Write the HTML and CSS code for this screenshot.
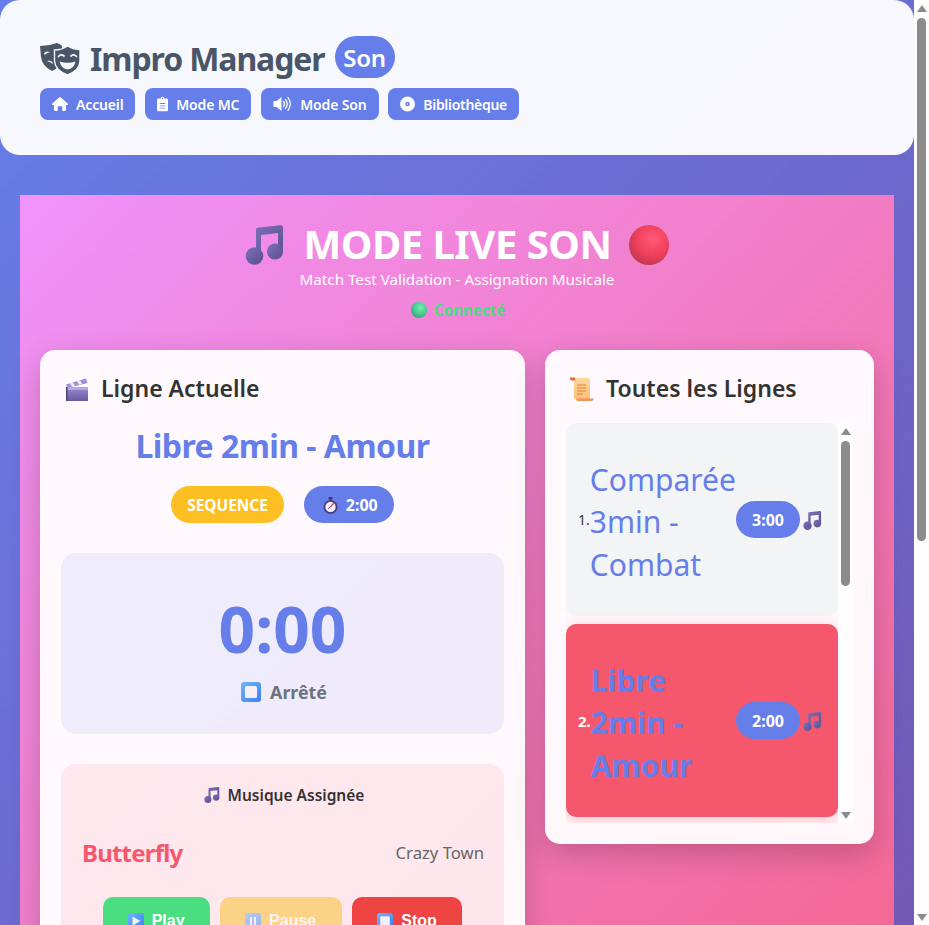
FILE: index.html
```html
<!DOCTYPE html>
<html lang="fr">
<head>
<meta charset="utf-8">
<title>Impro Manager - Mode Live Son</title>
<link rel="stylesheet" href="styles.css">
</head>
<body>
<svg class="defs" aria-hidden="true">
  <defs>
    <linearGradient id="gNote" x1="0" y1="0" x2="1" y2="1"><stop offset="0" stop-color="#7f6fb8"/><stop offset="1" stop-color="#58508f"/></linearGradient>
    <radialGradient id="gRed" cx=".6" cy=".35" r=".7"><stop offset="0" stop-color="#ff5a78"/><stop offset=".6" stop-color="#ee3f5c"/><stop offset="1" stop-color="#bf3750"/></radialGradient>
    <radialGradient id="gGreen" cx=".6" cy=".35" r=".7"><stop offset="0" stop-color="#6ff0ae"/><stop offset=".6" stop-color="#48c98f"/><stop offset="1" stop-color="#3b9d80"/></radialGradient>
    <linearGradient id="gBlue" x1="0" y1="0" x2="1" y2="1"><stop offset="0" stop-color="#6fb4fb"/><stop offset="1" stop-color="#3b82ee"/></linearGradient>
    <linearGradient id="gClap" x1="0" y1="0" x2="0" y2="1"><stop offset="0" stop-color="#8d7fc4"/><stop offset="1" stop-color="#6a5a9f"/></linearGradient>
    <linearGradient id="gScroll" x1="0" y1="0" x2="0" y2="1"><stop offset="0" stop-color="#ffd79a"/><stop offset="1" stop-color="#fbbf78"/></linearGradient>
    <symbol id="i-note" viewBox="0 0 42 40">
      <path fill="url(#gNote)" d="M11 4.500Q11 3 12.500 2.800L35 .2Q38 0 38 3V27H33V8L16 10V31H11Z"/>
      <circle fill="url(#gNote)" cx="9.500" cy="31" r="8.800"/>
      <circle fill="url(#gNote)" cx="30" cy="26.500" r="8"/>
    </symbol>
    <symbol id="i-red" viewBox="0 0 40 40"><circle cx="20" cy="20" r="20" fill="url(#gRed)"/></symbol>
    <symbol id="i-green" viewBox="0 0 16 16"><circle cx="8" cy="8" r="8" fill="url(#gGreen)"/></symbol>
    <symbol id="i-clap" viewBox="0 0 24 24">
      <path fill="#9d8fd6" d="M1 7.500 21 1.500 22.500 6 2.500 11Z"/>
      <path fill="#f1ecfb" d="M5 6.300 8 5.400 10 9 7 9.700ZM12 4.200 15 3.300 17 7 14 7.800Z"/>
      <rect x="1" y="10" width="22" height="3.500" fill="#b4a8e4"/>
      <rect x="1" y="13" width="22" height="11" fill="url(#gClap)"/>
      <rect x="1" y="10" width="1.500" height="14" fill="#4a3f7a"/>
    </symbol>
    <symbol id="i-scroll" viewBox="0 0 24 24">
      <path fill="url(#gScroll)" d="M3 1H18Q20 1 20 3V22H6Q4 22 4 20V4Q4 2 3 1Z"/>
      <path fill="#e2683c" d="M0 .5H5V3.500H2Q0 3.500 0 1.500Z"/>
      <path fill="#f0935a" d="M6 21.500H24Q23 24 21 24H8Q6 24 6 21.500Z"/>
      <path fill="none" stroke="#ea9a55" stroke-width="1.300" d="M7 8H16M7 11H16M7 14H16M7 17H13"/>
    </symbol>
    <symbol id="i-watch" viewBox="0 0 16 18">
      <rect x="6" y="0" width="4" height="2" fill="#3b2f66"/>
      <rect x="7" y="1" width="2" height="3" fill="#3b2f66"/>
      <circle cx="8" cy="10.500" r="7.500" fill="#4c3f7d"/>
      <circle cx="8" cy="10.500" r="5.500" fill="#f3effa"/>
      <path stroke="#f0325a" stroke-width="1.500" d="M8 10.500 11.500 6.500"/>
      <path stroke="#4c3f7d" d="M8 10.500 5.500 12.500"/>
    </symbol>
    <symbol id="i-stop" viewBox="0 0 20 20">
      <rect width="20" height="20" rx="3" fill="url(#gBlue)"/>
      <rect x="4" y="4" width="12" height="12" rx="1.500" fill="#f7eefc"/>
    </symbol>
    <symbol id="i-play" viewBox="0 0 16 16">
      <rect width="16" height="16" rx="2.500" fill="url(#gBlue)"/>
      <path fill="#eef4fd" d="M4.500 3.500 12.500 8 4.500 12.500Z"/>
    </symbol>
    <symbol id="i-pause" viewBox="0 0 16 16">
      <rect width="16" height="16" rx="2.500" fill="url(#gBlue)"/>
      <path fill="#eef4fd" d="M5 4H7V12H5ZM9 4H11V12H9Z"/>
    </symbol>
    <symbol id="i-masks" viewBox="0 0 40 32">
      <path fill="#4a5568" d="M0 3Q9 3 17 0 20 1 22 3L22 16Q20 25 12 28 2 23 1 14Z"/>
      <path fill="#f7f8fe" d="M4 10.500Q6.500 7 10 9.500 7 9 4.800 12ZM12.500 21Q8 17 6.500 19 8 16 12.500 19Z"/>
      <path fill="#4a5568" stroke="#f7f8fe" stroke-width="1.400" d="M14.500 7Q22 7 27.500 3 33 6.500 40 6.500V18Q40 27 27.500 32 15 27 14.500 18Z"/>
      <path fill="none" stroke="#f7f8fe" stroke-width="1.800" stroke-linecap="round" d="M18.500 13.500Q21 10.500 24 13M31 13Q34 10.500 36.500 13.500"/>
      <path fill="#f7f8fe" d="M19.500 18.500Q28 21 35.500 18.500 34 26 27.500 26.500 21.500 26 19.500 18.500Z"/>
    </symbol>
    <symbol id="i-home" viewBox="0 0 16 14"><path d="M7.300.3Q8 -.2 8.700.3L15.700 6.500Q16.300 7.200 15.800 7.700 15.400 8.200 14.800 8H14V12.800Q14 14 12.800 14H10.300V9.800Q10.300 9.300 9.800 9.300H6.200Q5.700 9.300 5.700 9.800V14H3.200Q2 14 2 12.800V8H1.200Q.6 8.200 .2 7.700-.3 7.200 .3 6.500Z"/></symbol>
    <symbol id="i-clip" viewBox="0 0 12 16"><path fill-rule="evenodd" d="M4 2Q4 0 6 0T8 2H10.500Q12 2 12 3.500V14.500Q12 16 10.500 16H1.500Q0 16 0 14.500V3.500Q0 2 1.500 2ZM5.300 2A.7.7 0 1 0 6.700 2 .7.7 0 1 0 5.300 2ZM3 7V8H9V7ZM3 9.500V10.500H9V9.500ZM3 12V13H9V12Z"/></symbol>
    <symbol id="i-vol" viewBox="0 0 18 16">
      <path d="M0 5H3L8 1V15L3 11H0Z"/>
      <path fill="none" stroke="#fff" stroke-width="1.300" stroke-linecap="round" d="M10 5.500Q12 8 10 10.500M12 3.500Q15.500 8 12 12.500M14.500 1.500Q19 8 14.500 14.500"/>
    </symbol>
    <symbol id="i-disc" viewBox="0 0 16 16"><path fill-rule="evenodd" d="M8 0A8 8 0 1 1 8 16 8 8 0 1 1 8 0ZM8 5.500A2.500 2.500 0 1 0 8 10.500 2.500 2.500 0 1 0 8 5.500ZM8 7.200A.8.8 0 1 1 8 8.800 .8.8 0 1 1 8 7.200Z"/></symbol>
  </defs>
</svg>

<div class="viewport">
  <div class="page">
    <header class="topbar">
      <div class="brand">
        <svg class="brand-icon"><use href="#i-masks"/></svg>
        <span class="brand-name">Impro Manager</span>
        <span class="brand-badge">Son</span>
      </div>
      <nav class="nav">
        <a class="nav-link"><svg class="nav-icon nav-home"><use href="#i-home"/></svg>Accueil</a>
        <a class="nav-link"><svg class="nav-icon nav-clip"><use href="#i-clip"/></svg>Mode MC</a>
        <a class="nav-link"><svg class="nav-icon nav-vol"><use href="#i-vol"/></svg>Mode Son</a>
        <a class="nav-link nav-link-lib"><svg class="nav-icon nav-disc"><use href="#i-disc"/></svg>Bibliothèque</a>
      </nav>
    </header>

    <main class="live">
      <section class="live-head">
        <h1 class="live-title">
          <svg class="live-note"><use href="#i-note"/></svg>
          <span class="live-text">MODE LIVE SON</span>
          <svg class="live-ball"><use href="#i-red"/></svg>
        </h1>
        <p class="live-sub">Match Test Validation - Assignation Musicale</p>
        <p class="live-conn"><svg class="conn-ball"><use href="#i-green"/></svg>Connecté</p>
      </section>

      <div class="columns">
        <section class="card">
          <h2 class="card-title"><svg class="title-icon"><use href="#i-clap"/></svg>Ligne Actuelle</h2>
          <div class="line-name">Libre 2min - Amour</div>
          <div class="line-meta">
            <span class="pill pill-type">SEQUENCE</span>
            <span class="pill pill-time"><svg class="watch"><use href="#i-watch"/></svg>2:00</span>
          </div>
          <div class="timer">
            <div class="timer-value">0:00</div>
            <div class="timer-status"><svg class="status-icon"><use href="#i-stop"/></svg>Arrêté</div>
          </div>
          <div class="music">
            <h3 class="music-title"><svg class="music-note"><use href="#i-note"/></svg>Musique Assignée</h3>
            <div class="track">
              <span class="track-name">Butterfly</span>
              <span class="track-artist">Crazy Town</span>
            </div>
            <div class="controls">
              <button class="ctl ctl-play"><svg class="ctl-icon"><use href="#i-play"/></svg>Play</button>
              <button class="ctl ctl-pause"><svg class="ctl-icon"><use href="#i-pause"/></svg>Pause</button>
              <button class="ctl ctl-stop"><svg class="ctl-icon"><use href="#i-stop"/></svg>Stop</button>
            </div>
          </div>
        </section>

        <aside class="card card-side">
          <h2 class="card-title"><svg class="title-icon title-scroll"><use href="#i-scroll"/></svg>Toutes les Lignes</h2>
          <div class="list-box">
            <div class="list">
              <div class="item">
                <span class="item-num">1.</span>
                <span class="item-name">Comparée 3min - Combat</span>
                <span class="pill pill-time">3:00</span>
                <svg class="item-note"><use href="#i-note"/></svg>
              </div>
              <div class="item item-active">
                <span class="item-num">2.</span>
                <span class="item-name">Libre 2min - Amour</span>
                <span class="pill pill-time">2:00</span>
                <svg class="item-note"><use href="#i-note"/></svg>
              </div>
              <div class="item">
                <span class="item-num">3.</span>
                <span class="item-name">Chantée 4min - Voyage</span>
                <span class="pill pill-time">4:00</span>
                <svg class="item-note"><use href="#i-note"/></svg>
              </div>
            </div>
            <div class="sb sb-list">
              <span class="sb-up"></span>
              <span class="sb-thumb sb-thumb-list"></span>
              <span class="sb-down"></span>
            </div>
          </div>
        </aside>
      </div>
    </main>
  </div>
</div>
<div class="sb sb-page">
  <span class="sb-up"></span>
  <span class="sb-thumb sb-thumb-page"></span>
  <span class="sb-down"></span>
</div>
</body>
</html>
```
FILE: styles.css
```css
* { box-sizing: border-box; }
html, body { height: 100%; }
body {
  display: flex;
  margin: 0;
  overflow: hidden;
  background: #fdfdfd;
  font-family: "Noto Sans", "Open Sans", "Liberation Sans", sans-serif;
  color: #333;
}
.defs { position: absolute; width: 0; height: 0; }

.viewport {
  flex: 1;
  min-width: 0;
  overflow-y: auto;
  scrollbar-width: none;
}
.page {
  min-height: 1580px;
  background: linear-gradient(135deg, #667eea 0%, #764ba2 100%);
}

/* Scrollbars */
.sb {
  display: flex;
  flex: none;
  flex-direction: column;
  align-items: flex-start;
  width: 15px;
  padding-left: 3px;
}
.sb-page { height: 100%; padding-top: 5px; background: #fdfdfd; }
.sb-list { height: 100%; padding-top: 5px; background: rgba(255, 255, 255, .7); }
.sb-up, .sb-down {
  flex: none;
  width: 0;
  height: 0;
  border-left: 5px solid transparent;
  border-right: 5px solid transparent;
}
.sb-up { border-bottom: 7px solid #8c8c8c; }
.sb-down { margin-top: auto; margin-bottom: 4px; border-top: 7px solid #8c8c8c; }
.sb-thumb { flex: none; width: 9px; margin-top: 6px; border-radius: 5px; background: #8c8c8c; }
.sb-thumb-page { height: 523px; }
.sb-thumb-list { height: 145px; }

/* Top bar */
.topbar {
  height: 155px;
  padding: 36px 40px 35px;
  background: rgba(255, 255, 255, .95);
  border-radius: 20px;
  margin-bottom: 40px;
}
.brand { display: flex; align-items: center; height: 42px; color: #4a5568; }
.brand-icon { width: 40px; height: 32px; margin: 4px 10px 0 0; }
.brand-name {
  font-size: 32px;
  font-weight: 700;
  letter-spacing: -1.100px;
  line-height: 46px;
  padding-top: 4px;
}
.brand-badge {
  margin-left: 10px;
  width: 60px;
  height: 42px;
  border-radius: 21px;
  background: #667eea;
  color: #fff;
  font-size: 24px;
  font-weight: 600;
  letter-spacing: -.3px;
  line-height: 43px;
  text-align: center;
}
.nav { display: flex; gap: 9.800px; margin-top: 10px; }
.nav-link {
  display: flex;
  align-items: center;
  height: 32px;
  padding: 0 12px;
  border-radius: 8px;
  background: #667eea;
  color: #fff;
  font-size: 14px;
  font-weight: 600;
  letter-spacing: -.15px;
  white-space: nowrap;
}
.nav-link-lib { letter-spacing: -.3px; }
.nav-icon { flex: none; fill: #fff; height: 16px; margin-right: 8px; margin-top: -1px; }
.nav-home { width: 16px; }
.nav-clip { width: 11px; }
.nav-vol { width: 19px; }
.nav-disc { width: 15px; }

/* Live panel */
.live {
  margin: 0 20px 20px;
  min-height: 1365px;
  padding: 20px;
  background: linear-gradient(135deg, #f093fb 0%, #f5576c 100%);
}
.live-head { text-align: center; color: #fff; }
.live-title {
  display: flex;
  justify-content: center;
  align-items: center;
  gap: 17px;
  margin: 8px 0 0;
  font-size: 40px;
  font-weight: 700;
  letter-spacing: -.5px;
  line-height: 42px;
}
.live-text { padding-bottom: 2px; }
.live-note { width: 42px; height: 40px; }
.live-ball { width: 40px; height: 40px; margin-left: 1px; }
.live-sub { margin: 2px 0 0; font-size: 15.200px; line-height: 20px; }
.live-conn {
  display: flex;
  justify-content: center;
  align-items: center;
  gap: 7px;
  margin: 11px 0 0;
  padding-left: 2px;
  font-size: 15.200px;
  font-weight: 700;
  line-height: 20px;
  color: #4ade80;
}
.conn-ball { width: 16px; height: 16px; }

.columns {
  display: grid;
  grid-template-columns: 485px 329px;
  gap: 20px;
  align-items: start;
  margin-top: 30px;
}

.card {
  padding: 21px;
  border-radius: 15px;
  background: rgba(255, 255, 255, .95);
  box-shadow: 0 10px 30px rgba(0, 0, 0, .2);
}
.card-title {
  display: flex;
  align-items: center;
  margin: 0;
  height: 36px;
  padding-bottom: 2px;
  font-size: 23px;
  font-weight: 600;
  color: #333;
}
.title-icon { width: 24px; height: 24px; margin: 2px 12px 0 4px; }

.line-name {
  margin-top: 19px;
  text-align: center;
  font-size: 32px;
  font-weight: 700;
  letter-spacing: -.55px;
  line-height: 40px;
  color: #667eea;
}
.line-meta { display: flex; justify-content: center; gap: 20px; margin-top: 20px; }
.line-meta .pill { padding-top: 1px; }
.pill {
  display: inline-flex;
  align-items: center;
  flex: none;
  height: 37px;
  padding: 0 16px;
  border-radius: 19px;
  color: #fff;
  font-size: 16px;
  font-weight: 700;
}
.pill-type { background: #fdbf22; font-size: 15.400px; }
.pill-time { background: #667eea; }
.watch { width: 15px; height: 17px; margin: 0 8px 0 3px; }

.timer {
  height: 181px;
  margin-top: 30px;
  padding-top: 36px;
  border-radius: 15px;
  background: rgba(102, 126, 234, .1);
  text-align: center;
}
.timer-value { font-size: 64px; font-weight: 700; line-height: 80px; color: #667eea; }
.timer-status {
  display: flex;
  justify-content: center;
  align-items: center;
  gap: 9px;
  margin-top: 11px;
  padding-left: 3px;
  font-size: 17.800px;
  font-weight: 700;
  line-height: 24px;
  color: #6b7280;
}
.status-icon { width: 20px; height: 20px; }

.music {
  margin-top: 30px;
  padding: 21px;
  border-radius: 15px;
  background: rgba(245, 87, 108, .1);
}
.music-title {
  display: flex;
  justify-content: center;
  align-items: center;
  gap: 7px;
  margin: 0;
  height: 20px;
  padding-left: 3px;
  font-size: 15.500px;
  font-weight: 600;
  color: #333;
}
.music-note { width: 17px; height: 16px; }
.track {
  display: flex;
  justify-content: space-between;
  align-items: center;
  margin: 29px -1px 0 0;
  height: 36px;
}
.track-name { font-size: 24px; font-weight: 700; letter-spacing: -.8px; color: #f5576c; }
.track-artist { font-size: 16.700px; color: #666; }
.controls { display: flex; justify-content: center; gap: 10px; margin-top: 27px; }
.ctl {
  display: flex;
  align-items: center;
  justify-content: center;
  gap: 8px;
  height: 48px;
  padding: 0 25px;
  border: 0;
  border-radius: 10px;
  color: #fff;
  font-family: "Liberation Sans", Arial, sans-serif;
  font-size: 16px;
  font-weight: 700;
}
.ctl-icon { width: 16px; height: 16px; }
.ctl-play { background: #4ade80; }
.ctl-pause { padding-left: 25.500px; padding-right: 25.500px; background: #fbbf24; opacity: .5; }
.ctl-stop { padding-left: 25.500px; padding-right: 25.500px; background: #ef4444; }

/* Side list */
.list-box {
  display: flex;
  height: 400px;
  margin-top: 16px;
}
.list {
  flex: 1;
  min-width: 0;
  overflow-y: auto;
  scrollbar-width: none;
}
.item {
  display: flex;
  align-items: center;
  height: 193px;
  margin-bottom: 8px;
  padding: 0 15px 0 12px;
  border-radius: 10px;
  background: #f3f4f6;
  color: #333;
}
.item-num { font-size: 14px; flex: none; }
.item-name {
  flex: 1;
  min-width: 0;
  padding-top: 6px;
  font-size: 30px;
  line-height: 42.500px;
  color: #667eea;
}
.item-note { width: 20px; height: 19px; margin: 1px 0 0 3px; flex: none; }
.item-active {
  background: #f5576c;
  color: #fff;
  box-shadow: 0 4px 15px rgba(245, 87, 108, .3);
}
.item-active .item-num { font-size: 15px; font-weight: 700; }
.item-active .item-name { font-weight: 700; }
```
